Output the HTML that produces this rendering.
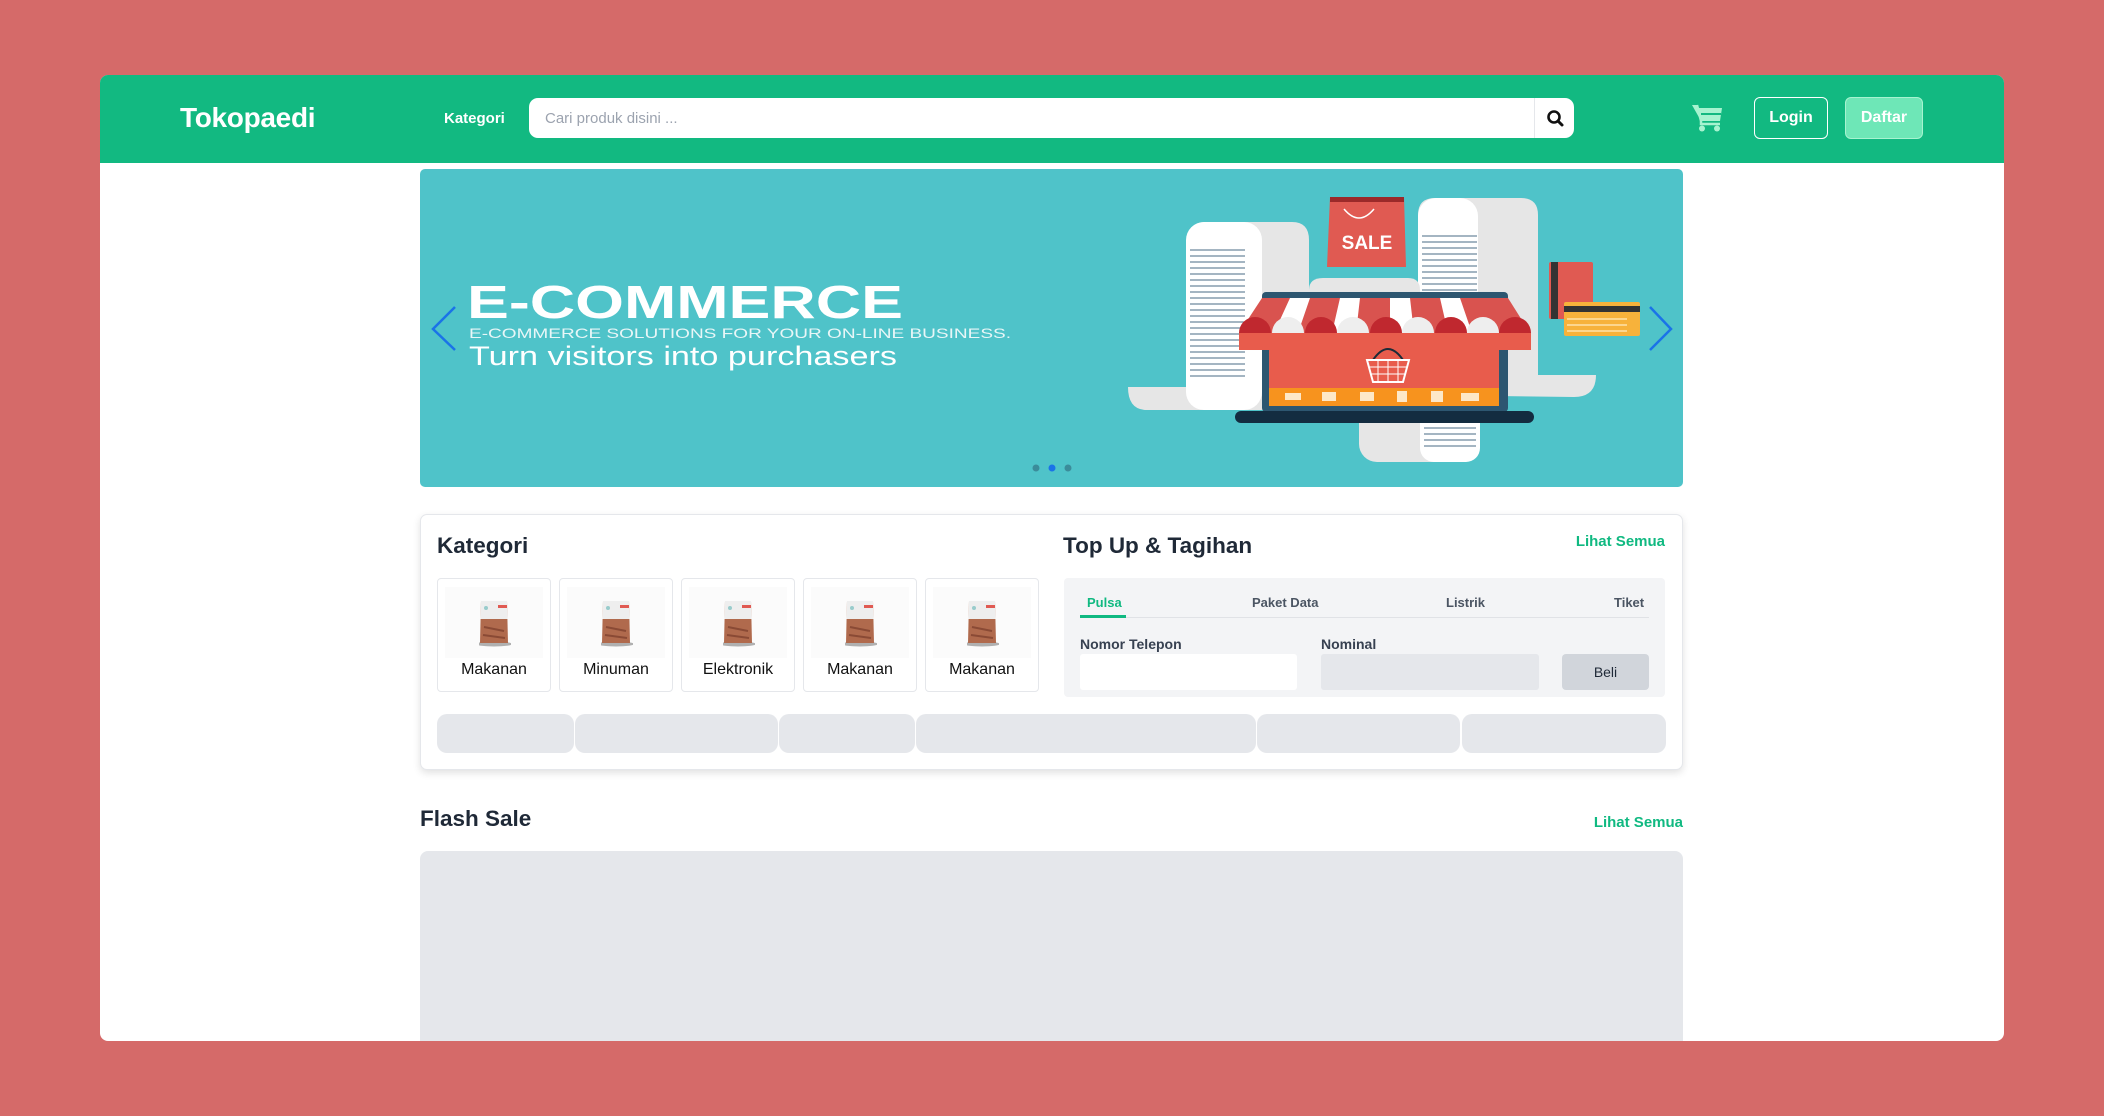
<!DOCTYPE html>
<html><head><meta charset="utf-8"><style>
*{box-sizing:border-box;margin:0;padding:0}
body{width:2104px;height:1116px;background:#d56a69;font-family:"Liberation Sans",Arial,sans-serif;position:relative;overflow:hidden}
.page{position:absolute;left:100px;top:75px;width:1904px;height:966px;background:#fff;border-radius:8px;overflow:hidden}
.hdr{position:absolute;left:0;top:0;width:1904px;height:88px;background:#12b981}
.abs{position:absolute}
.logo{left:80px;top:27px;color:#fff;font-weight:bold;font-size:28px;letter-spacing:-0.3px}
.kat{left:344px;top:35px;color:#fff;font-weight:bold;font-size:15px}
.search{left:429px;top:23px;width:1045px;height:40px;background:#fff;border-radius:9px}
.search span{position:absolute;left:16px;top:12px;color:#9ca3af;font-size:15px}
.sbtn{position:absolute;left:1005px;top:0;width:40px;height:40px;border-left:1px solid #e5e7eb}
.btn{top:22px;height:42px;border-radius:6px;color:#fff;font-weight:bold;font-size:16px;text-align:center;line-height:40px}
.card{position:absolute;left:420px;top:514px;width:1263px;height:256px;background:#fff;border:1px solid #e5e7eb;border-radius:7px;box-shadow:0 3px 8px rgba(0,0,0,.12)}
h2{position:absolute;font-size:22.5px;font-weight:bold;color:#1f2937}
.lihat{position:absolute;color:#10b981;font-weight:bold;font-size:15px}
.tile{position:absolute;top:578px;width:114px;height:114px;border:1px solid #e5e7eb;border-radius:4px;background:#fff}
.tile .im{position:absolute;left:7px;top:8px;width:98px;height:71px;background:#fbfbfb}
.tile .lb{position:absolute;left:0;right:0;top:82px;text-align:center;font-size:16px;color:#111}
.pill{position:absolute;top:714px;height:39px;background:#e5e7eb;border-radius:10px}
.tab{position:absolute;top:595px;font-size:13px;color:#4b5563;font-weight:bold}
.lbl{position:absolute;top:636px;font-size:14px;font-weight:bold;color:#374151}
</style></head><body>
<div class="page">
 <div class="hdr">
  <div class="abs logo">Tokopaedi</div>
  <div class="abs kat">Kategori</div>
  <div class="abs search"><span>Cari produk disini ...</span>
   <div class="sbtn"><svg width="40" height="40" viewBox="0 0 40 40"><circle cx="19" cy="19" r="5.5" fill="none" stroke="#111" stroke-width="2.6"/><line x1="23" y1="23" x2="27" y2="27" stroke="#111" stroke-width="3" stroke-linecap="round"/></svg></div>
  </div>
  <svg class="abs" style="left:1592px;top:29px" width="31" height="28" viewBox="0 0 31 28"><path d="M0 1h5l2 3h23l-2 13H9z" fill="#a7f3d0"/><path d="M5 1l4 16v3h19" fill="none" stroke="#a7f3d0" stroke-width="2.5"/><circle cx="10" cy="24.5" r="3" fill="#a7f3d0"/><circle cx="25" cy="24.5" r="3" fill="#a7f3d0"/><rect x="9" y="9" width="20" height="2" fill="#12b981"/></svg>
  <div class="abs btn" style="left:1654px;width:74px;border:1.5px solid #fff">Login</div>
  <div class="abs btn" style="left:1745px;width:78px;background:#6ee7b7;border:1.5px solid #a7f3d0">Daftar</div>
 </div>
</div>
<div class="abs" style="left:420px;top:169px;width:1263px;height:318px;background:#4fc3c9;border-radius:5px;overflow:hidden">
<svg width="1263" height="318" viewBox="420 169 1263 318" style="position:absolute;left:0;top:0">
 <text x="467" y="318" fill="#fff" font-family="Liberation Sans,Arial" font-weight="bold" font-size="46" textLength="436" lengthAdjust="spacingAndGlyphs">E-COMMERCE</text>
 <text x="469" y="338" fill="#e8f6f7" font-family="Liberation Sans,Arial" font-size="14" textLength="542" lengthAdjust="spacingAndGlyphs">E-COMMERCE SOLUTIONS FOR YOUR ON-LINE BUSINESS.</text>
 <text x="469" y="365" fill="#fff" font-family="Liberation Sans,Arial" font-size="27" textLength="428" lengthAdjust="spacingAndGlyphs">Turn visitors into purchasers</text>
 <path d="M455 307L433 329L455 350" fill="none" stroke="#1a73e8" stroke-width="2.5"/>
 <path d="M1650 307L1671 329L1650 350" fill="none" stroke="#1a73e8" stroke-width="2.5"/>
 <circle cx="1036" cy="468" r="3.5" fill="#3b8c9a"/><circle cx="1052" cy="468" r="3.5" fill="#1a73e8"/><circle cx="1068" cy="468" r="3.5" fill="#3b8c9a"/>
 <path d="M1128 387h60V240q0-18 18-18h86q17 0 17 18v170h-162q-19 0-19-23z" fill="#e6e6e6"/>
 <rect x="1186" y="222" width="76" height="188" rx="18" fill="#fff"/>
 <g stroke="#4a6b85" stroke-width="1">
  <path d="M1190 250h55M1190 256h55M1190 262h55M1190 268h55M1190 274h55M1190 280h55M1190 286h55M1190 292h55M1190 298h55M1190 304h55M1190 310h55M1190 316h55M1190 322h55M1190 328h55M1190 334h55M1190 340h55M1190 346h55M1190 352h55M1190 358h55M1190 364h55M1190 370h55M1190 376h55"/>
 </g>
 <path d="M1418 395V215q0-17 17-17h86q17 0 17 17v160h58q0 22-22 22z" fill="#e6e6e6"/>
 <rect x="1418" y="198" width="60" height="197" rx="18" fill="#fff"/>
 <g stroke="#4a6b85" stroke-width="1"><path d="M1422 236h55M1422 242h55M1422 248h55M1422 254h55M1422 260h55M1422 266h55M1422 272h55M1422 278h55M1422 284h55M1422 290h55"/></g>
 <path d="M1309 290q0-12 14-12h85q12 0 12 12v10h-111z" fill="#e6e6e6"/>
 <rect x="1359" y="405" width="121" height="57" rx="18" fill="#e6e6e6"/><rect x="1420" y="405" width="60" height="57" rx="14" fill="#fff"/>
 <g stroke="#4a6b85" stroke-width="1"><path d="M1424 428h52M1424 434h52M1424 440h52M1424 446h52"/></g>
 <path d="M1330 197h74l2 70h-79z" fill="#e05a52"/><rect x="1330" y="197" width="74" height="5" fill="#9b2a2a"/>
 <path d="M1344 209q15 18 30 0" fill="none" stroke="#fff" stroke-width="1.5"/>
 <text x="1367" y="249" text-anchor="middle" fill="#fff" font-family="Liberation Sans,Arial" font-weight="bold" font-size="19">SALE</text>
 <rect x="1549" y="262" width="44" height="57" rx="2" fill="#e05a52"/><rect x="1551" y="262" width="7" height="57" fill="#333"/>
 <rect x="1564" y="302" width="76" height="34" rx="2" fill="#f7b23b"/><rect x="1564" y="306" width="76" height="6" fill="#333"/>
 <g stroke="#fde2a9" stroke-width="1.5"><path d="M1567 319h60M1567 325h60M1567 331h60"/></g>
 <rect x="1262" y="292" width="246" height="120" rx="4" fill="#2d5670"/>
 <rect x="1269" y="298" width="230" height="90" fill="#e85c4c"/>
 <rect x="1269" y="388" width="230" height="18" fill="#f7931e"/>
 <g fill="#fde8c8"><rect x="1285" y="393" width="16" height="7"/><rect x="1322" y="392" width="14" height="9"/><rect x="1360" y="392" width="14" height="9"/><rect x="1397" y="391" width="10" height="11"/><rect x="1431" y="391" width="12" height="11"/><rect x="1461" y="393" width="18" height="8"/></g>
 <rect x="1235" y="411" width="299" height="12" rx="6" fill="#132c40"/>
 <path d="M1262 298h246l22 35h-291z" fill="#d9534f"/>
 <path d="M1290 298h20l-12 35h-24zM1340 298h20l-4 35h-24zM1390 298h20l4 35h-24zM1440 298h20l12 35h-24z" fill="#fff"/>
 <g fill="#c0282f"><circle cx="1255" cy="333" r="16"/><circle cx="1321" cy="333" r="16"/><circle cx="1386" cy="333" r="16"/><circle cx="1451" cy="333" r="16"/><circle cx="1515" cy="333" r="16"/></g>
 <g fill="#eee"><circle cx="1288" cy="333" r="16"/><circle cx="1353" cy="333" r="16"/><circle cx="1418" cy="333" r="16"/><circle cx="1483" cy="333" r="16"/></g>
 <rect x="1239" y="333" width="292" height="17" fill="#e85c4c"/>
 <rect x="1269" y="345" width="230" height="5" fill="#e85c4c"/>
 <path d="M1373 360q15-22 30 0" fill="none" stroke="#1b2b38" stroke-width="2"/>
 <path d="M1367 360h42l-6 22h-30z" fill="none" stroke="#fff" stroke-width="2"/>
 <g stroke="#fff" stroke-width="1"><path d="M1369 367h38M1371 374h34M1378 360v22M1388 360v22M1398 360v22"/></g>
</svg>
</div>
<div class="card"></div>
<h2 style="left:437px;top:533px">Kategori</h2>
<h2 style="left:1063px;top:533px">Top Up &amp; Tagihan</h2>
<div class="lihat" style="right:439px;top:533px">Lihat Semua</div>
<svg width="0" height="0" style="position:absolute"><defs><g id="bag"><ellipse cx="15" cy="44" rx="18" ry="2.5" fill="#555" opacity=".45"/><path d="M2 1h26l1 42H1z" fill="#b06a4d"/><path d="M2 1h26l.5 18H1.5z" fill="#eee"/><rect x="19" y="5" width="9" height="3" fill="#e05a52"/><circle cx="7" cy="8" r="2" fill="#9cc"/><path d="M5 27l20 4M4 35l22 3" stroke="#8a4a35" stroke-width="2"/></g></defs></svg>
<div class="tile" style="left:437px"><div class="im"><svg style="position:absolute;left:34px;top:13px" width="32" height="48"><use href="#bag"/></svg></div><div class="lb">Makanan</div></div>
<div class="tile" style="left:559px"><div class="im"><svg style="position:absolute;left:34px;top:13px" width="32" height="48"><use href="#bag"/></svg></div><div class="lb">Minuman</div></div>
<div class="tile" style="left:681px"><div class="im"><svg style="position:absolute;left:34px;top:13px" width="32" height="48"><use href="#bag"/></svg></div><div class="lb">Elektronik</div></div>
<div class="tile" style="left:803px"><div class="im"><svg style="position:absolute;left:34px;top:13px" width="32" height="48"><use href="#bag"/></svg></div><div class="lb">Makanan</div></div>
<div class="tile" style="left:925px"><div class="im"><svg style="position:absolute;left:34px;top:13px" width="32" height="48"><use href="#bag"/></svg></div><div class="lb">Makanan</div></div>
<div class="abs" style="left:1064px;top:578px;width:601px;height:119px;background:#f3f4f6;border-radius:4px"></div>
<div class="tab" style="left:1087px;color:#10b981">Pulsa</div>
<div class="tab" style="left:1252px">Paket Data</div>
<div class="tab" style="left:1446px">Listrik</div>
<div class="tab" style="left:1614px">Tiket</div>
<div class="abs" style="left:1080px;top:617px;width:569px;height:1px;background:#e0e2e6"></div>
<div class="abs" style="left:1080px;top:615px;width:46px;height:3px;background:#10b981"></div>
<div class="lbl" style="left:1080px">Nomor Telepon</div>
<div class="lbl" style="left:1321px">Nominal</div>
<div class="abs" style="left:1080px;top:654px;width:217px;height:36px;background:#fff;border-radius:3px"></div>
<div class="abs" style="left:1321px;top:654px;width:218px;height:36px;background:#e5e7eb;border-radius:3px"></div>
<div class="abs" style="left:1562px;top:654px;width:87px;height:36px;background:#d1d5db;border-radius:4px;text-align:center;line-height:36px;font-size:14px;color:#1f2937">Beli</div>
<div class="pill" style="left:437px;width:137px"></div>
<div class="pill" style="left:575px;width:203px"></div>
<div class="pill" style="left:779px;width:136px"></div>
<div class="pill" style="left:916px;width:340px"></div>
<div class="pill" style="left:1257px;width:203px"></div>
<div class="pill" style="left:1462px;width:204px"></div>
<h2 style="left:420px;top:806px">Flash Sale</h2>
<div class="lihat" style="right:421px;top:814px">Lihat Semua</div>
<div class="abs" style="left:420px;top:851px;width:1263px;height:190px;background:#e5e7eb;border-radius:8px 8px 0 0"></div>
</body></html>
